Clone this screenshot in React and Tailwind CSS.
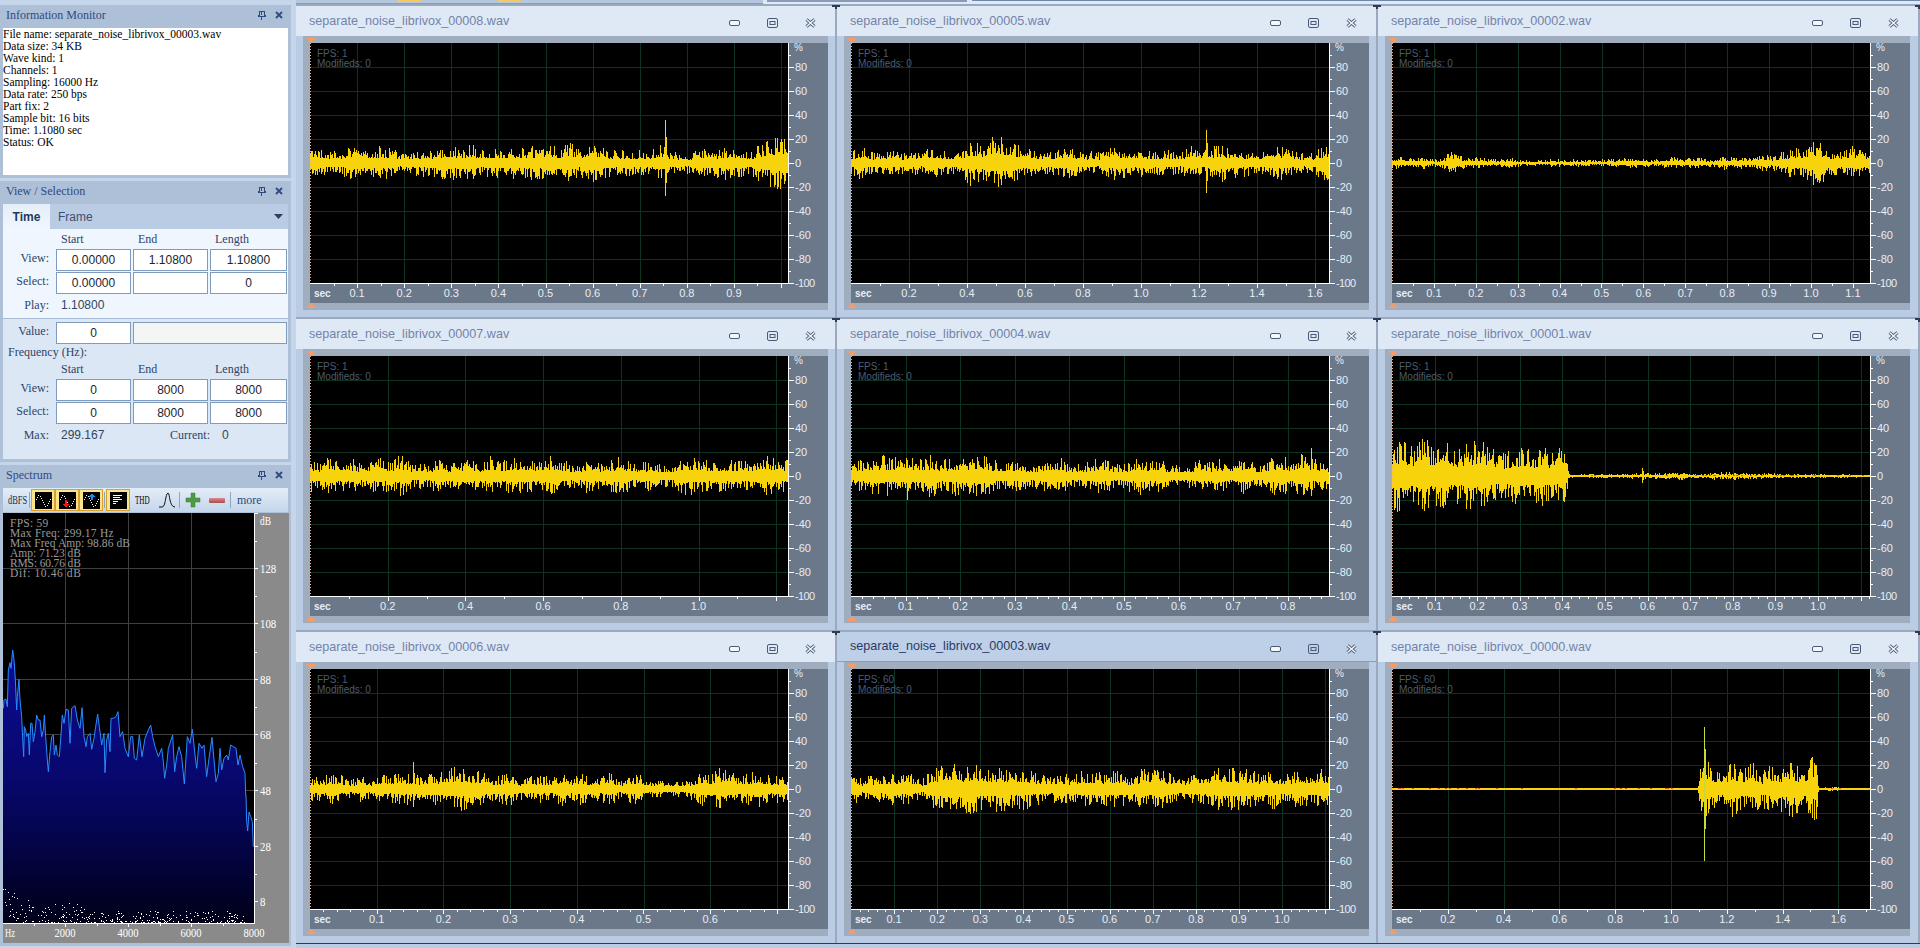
import React from "react";

const SERIF = { fontFamily: '"Liberation Serif", serif' };
const SANS = { fontFamily: '"Liberation Sans", sans-serif' };

// seeded random so the noise stays the same on every render
const makeRandom = (seed) => {
  let a = seed;
  return () => {
    a = (a + 0x6d2b79f5) | 0;
    let t = Math.imul(a ^ (a >>> 15), 1 | a);
    t = (t + Math.imul(t ^ (t >>> 7), 61 | t)) ^ t;
    return ((t ^ (t >>> 14)) >>> 0) / 4294967296;
  };
};

const envAt = (env, f) => {
  for (let i = 1; i < env.length; i++) {
    if (f <= env[i][0]) {
      const [x0, y0] = env[i - 1];
      const [x1, y1] = env[i];
      return y0 + ((y1 - y0) * (f - x0)) / (x1 - x0);
    }
  }
  return env[env.length - 1][1];
};

const windows = [
  { name: "00008", fps: 1, px: 47.1, step: 0.1, count: 9, sub: 2, seed: 8,
    env: [[0, 13], [0.3, 13], [0.5, 15], [0.7, 12], [0.85, 14], [0.95, 17], [1, 26]],
    spikes: [[355, 43, 33], [470, 20, 26]] },
  { name: "00005", fps: 1, px: 58, step: 0.2, count: 8, sub: 2, seed: 5,
    env: [[0, 12], [0.2, 12], [0.25, 22], [0.33, 24], [0.4, 14], [0.6, 12], [0.8, 14], [1, 13]],
    spikes: [[355, 33, 30], [150, 26, 22]] },
  { name: "00002", fps: 1, px: 41.9, step: 0.1, count: 11, sub: 2, seed: 2,
    env: [[0, 4], [0.1, 5], [0.13, 14], [0.16, 5], [0.3, 3], [0.5, 4], [0.7, 5], [0.8, 8], [0.9, 18], [0.95, 15], [1, 8]],
    spikes: [[428, 20, 18]] },
  { name: "00007", fps: 1, px: 77.7, step: 0.2, count: 5, sub: 2, seed: 7,
    env: [[0, 14], [0.5, 15], [0.8, 14], [1, 15]],
    spikes: [] },
  { name: "00004", fps: 1, px: 54.6, step: 0.1, count: 8, sub: 5, seed: 4,
    env: [[0, 13], [0.2, 16], [0.5, 13], [0.7, 13], [0.9, 15], [0.97, 20], [1, 16]],
    spikes: [[56, 4, 24], [460, 28, 20]] },
  { name: "00001", fps: 1, px: 42.6, step: 0.1, count: 10, sub: 5, seed: 1,
    env: [[0, 30], [0.1, 32], [0.2, 28], [0.35, 26], [0.362, 26], [0.37, 2], [0.5, 2], [0.55, 3], [0.72, 3], [0.8, 2], [1, 1.5]],
    spikes: [[250, 8, 7], [2, 26, 34], [36, 30, 32], [172, 22, 26]], red: true },
  { name: "00006", fps: 1, px: 66.7, step: 0.1, count: 6, sub: 5, seed: 6,
    env: [[0, 12], [0.1, 10], [0.2, 14], [0.3, 17], [0.4, 13], [0.5, 14], [0.7, 10], [0.75, 8], [0.85, 16], [1, 14]],
    spikes: [[103, 27, 18]] },
  { name: "00003", fps: 60, px: 43.1, step: 0.1, count: 10, sub: 5, seed: 3, active: true,
    env: [[0, 12], [0.15, 12], [0.2, 20], [0.33, 20], [0.42, 13], [0.6, 15], [0.75, 15], [0.9, 17], [1, 15]],
    spikes: [] },
  { name: "00000", fps: 60, px: 55.8, step: 0.2, count: 8, sub: 2, seed: 10,
    env: [[0, 1], [0.638, 1], [0.646, 22], [0.8, 22], [0.885, 24], [0.892, 1.5], [1, 1.5]],
    spikes: [[424, 24, 30]], red: true, burst: [312, 62, 72] },
];

const wavePath = (w) => {
  const rnd = makeRandom(w.seed * 7919);
  // slow wobble of the loudness, so the band is not a flat strip
  const knots = Array.from({ length: 60 }, () => 0.65 + rnd() * 0.6);
  let d = "";
  for (let x = 0; x < 478; x++) {
    const k = x / 10;
    const i = Math.floor(k);
    const mod = knots[i] + (knots[i + 1] - knots[i]) * (k - i);
    const e = envAt(w.env, x / 478) * 1.2 * mod;
    const up = e * (0.3 + 0.7 * Math.pow(rnd(), 1.8));
    const down = e * (0.3 + 0.7 * Math.pow(rnd(), 1.8));
    d += `M${x + 0.5} ${(120 - Math.max(up, 1)).toFixed(1)}V${(120 + Math.max(down, 1)).toFixed(1)}`;
  }
  w.spikes.forEach(([x, u, v]) => {
    d += `M${x + 0.5} ${120 - u}V${120 + v}M${x + 1.5} ${120 - u * 0.6}V${120 + v * 0.6}`;
  });
  return d;
};

const Plot = ({ w }) => {
  const gridX = [];
  for (let x = w.px; x < 478; x += w.px) gridX.push(Math.round(x));
  const ticksX = [];
  for (let x = w.px / w.sub; x < 478; x += w.px / w.sub) ticksX.push(Math.round(x));
  const yVals = [80, 60, 40, 20, 0, -20, -40, -60, -80, -100];
  const rnd = makeRandom(w.seed * 31);
  const reds = w.red ? Array.from({ length: 40 }, () => Math.round(rnd() * 478)) : [];
  return (
    <svg width="518" height="260" className="block" style={SANS} shapeRendering="crispEdges">
      <rect x="0" y="0" width="478" height="240" fill="#000" />
      {gridX.map((x) => (
        <line key={x} x1={x + 0.5} x2={x + 0.5} y1="0" y2="240" stroke="#0d3320" />
      ))}
      {yVals.slice(0, -1).map((v) => {
        const y = 120 - v * 1.2;
        return <line key={v} x1="0" x2="478" y1={y + 0.5} y2={y + 0.5} stroke="#0d3320" />;
      })}
      <path d={wavePath(w)} stroke="#f6d30a" strokeWidth="1" fill="none" />
      <line x1="0" x2="478" y1="120" y2="120" stroke="#f6d30a" strokeWidth="2" />
      {reds.map((x, i) => (
        (w.name !== "00000" && x < 175) || (w.name === "00000" && x > 300 && x < 430) ? null : (
          <rect key={i} x={x} y="119" width="2" height="1" fill="#e2571a" />
        )
      ))}
      {w.burst && (
        <path d={`M${w.burst[0] + 0.5} ${120 - w.burst[1]}V${120 + w.burst[2]}M${w.burst[0] + 1.5} ${120 - 40}V${120 + 40}`} stroke="#c6da3c" fill="none" />
      )}
      <line x1="0.5" x2="0.5" y1="0" y2="240" stroke="#f2b08e" strokeDasharray="1 2" />
      <text x="7" y="14" fontSize="10" fill="#4b5c70">FPS: {w.fps}</text>
      <text x="7" y="24" fontSize="10" fill="#4b5c70">Modifieds: 0</text>
      {/* axes */}
      <line x1="478.5" x2="478.5" y1="0" y2="241" stroke="#fff" />
      <line x1="0" x2="479" y1="240.5" y2="240.5" stroke="#fff" />
      <text x="484" y="8" fontSize="10" fill="#e8edf5">%</text>
      {yVals.map((v) => {
        const y = 120 - v * 1.2;
        return (
          <g key={v}>
            <line x1="479" x2="484" y1={y + 0.5} y2={y + 0.5} stroke="#fff" />
            <line x1="479" x2="481" y1={y - 11.5} y2={y - 11.5} stroke="#fff" />
            <text x="485" y={y + 4} fontSize="11" fill="#e8edf5" textLength={v === -100 ? 20 : undefined}>{v}</text>
          </g>
        );
      })}
      {ticksX.map((x, i) => (
        <line key={x} x1={x + 0.5} x2={x + 0.5} y1="241" y2={(i + 1) % w.sub === 0 ? 245 : 243} stroke="#fff" />
      ))}
      <text x="4" y="254" fontSize="10" fontWeight="700" fill="#e8edf5">sec</text>
      {Array.from({ length: w.count }, (_, i) => (
        <text key={i} x={(i + 1) * w.px} y="254" fontSize="11" fill="#e8edf5" textAnchor="middle">
          {((i + 1) * w.step).toFixed(1)}
        </text>
      ))}
    </svg>
  );
};

const Marker = ({ up }) => (
  <svg width="10" height="5" className="block ml-[3px]">
    <path d={up ? "M5 0L10 5H0Z" : "M0 0H10L5 5Z"} fill="#fb9a63" />
  </svg>
);

const WaveWindow = ({ w }) => (
  <div className="relative h-[313px] border-t-2 border-r-2 border-[#9aa9bd] bg-[#b9cce4]">
    <div className={`h-[30px] flex items-center justify-between pl-[13px] text-[12.6px] ${w.active ? "bg-[#bdd0e8] text-[#2b3a66] border-b border-[#8d9db5]" : "bg-[#dfe9f6] text-[#7383a8]"}`} style={SANS}>
      <span>separate_noise_librivox_{w.name}.wav</span>
      <div className="flex items-center gap-[27px] pr-[19px] mt-[4px]">
        <svg width="11" height="6"><rect x="0.5" y="0.5" width="10" height="5" rx="1.5" fill="#f4f7fb" stroke="#4a5a78" /></svg>
        <svg width="11" height="10"><rect x="0.5" y="0.5" width="10" height="9" rx="1.5" fill="none" stroke="#4a5a78" /><rect x="3" y="3.5" width="5" height="3" fill="none" stroke="#4a5a78" /></svg>
        <svg width="11" height="10"><path d="M1.5 1.5L9.5 8.5M9.5 1.5L1.5 8.5" stroke="#4a5a78" strokeWidth="3" fill="none" /><path d="M1.5 1.5L9.5 8.5M9.5 1.5L1.5 8.5" stroke="#f4f7fb" strokeWidth="1.4" fill="none" /></svg>
      </div>
    </div>
    <div className="ml-[7px] w-[525px]">
      <div className="h-[7px] bg-[#a0adbf] pt-[2px]"><Marker /></div>
      <div className="flex">
        <div className="w-[7px] bg-[#a0adbf]" />
        <div className="bg-[#6b7889]"><Plot w={w} /></div>
      </div>
      <div className="h-[7px] bg-[#a0adbf]"><Marker up /></div>
    </div>
    {/* little split handle on the corner of each window */}
    <div className="absolute -top-[1px] -right-[5px] z-10 flex flex-col items-center">
      <div className="w-[8px] h-[2px] bg-[#2c3a55]" />
      <div className="w-[2px] h-[2px] bg-[#2c3a55]" />
    </div>
  </div>
);

const PanelTitle = ({ children }) => (
  <div className="h-[23px] flex items-center justify-between pl-[6px] pr-[8px] pb-[4px] text-[12px] text-[#2f4a80]" style={SERIF}>
    <span>{children}</span>
    <div className="flex items-center gap-[9px]">
      <svg width="9" height="10" viewBox="0 0 9 10">
        <path d="M2 1H7V5H8V6H1V5H2ZM4 2V5M4 6V10" stroke="#2f4a80" strokeWidth="1" fill="none" shapeRendering="crispEdges" />
      </svg>
      <svg width="8" height="8" viewBox="0 0 8 8">
        <path d="M1 1L7 7M7 1L1 7" stroke="#2f4a80" strokeWidth="1.8" fill="none" />
      </svg>
    </div>
  </div>
);

const infoLines = [
  "File name: separate_noise_librivox_00003.wav",
  "Data size: 34 KB",
  "Wave kind: 1",
  "Channels: 1",
  "Sampling: 16000 Hz",
  "Data rate: 250 bps",
  "Part fix: 2",
  "Sample bit: 16 bits",
  "Time: 1.1080 sec",
  "Status: OK",
];

const Box = ({ children, wide }) => (
  <div className={`h-[22px] ${wide ? "w-[77px]" : "w-[75px]"} border border-[#7f9bbd] bg-white flex items-center justify-center text-[12px] text-[#1a2433]`} style={SANS}>
    {children}
  </div>
);

const Label = ({ children }) => (
  <div className="w-[46px] text-right text-[12px] text-[#2d4468] whitespace-nowrap" style={SERIF}>{children}</div>
);

const FieldRow = ({ label, a, b, c }) => (
  <div className="h-[23px] flex items-start">
    <Label>{label}</Label>
    <div className="ml-[7px] flex gap-[2px]">
      <Box>{a}</Box>
      <Box>{b}</Box>
      <Box wide>{c}</Box>
    </div>
  </div>
);

const HeadRow = () => (
  <div className="h-[20px] flex text-[12px] text-[#2d4468] items-center" style={SERIF}>
    <span className="ml-[58px] w-[77px]">Start</span>
    <span className="w-[77px]">End</span>
    <span>Length</span>
  </div>
);

const ViewSelection = () => (
  <div className="mx-[3px] h-[255px] bg-[#dce7f5]">
    <div className="h-[25px] flex bg-[#b9cce4] items-center" style={SANS}>
      <div className="w-[47px] h-full bg-gradient-to-b from-[#e4eefa] to-[#f0f6fe] flex items-center justify-center font-bold text-[#1f3a60] text-[12px]">Time</div>
      <span className="ml-[8px] text-[#3c5070] text-[12px]">Frame</span>
      <svg width="9" height="5" className="ml-auto mr-[5px]"><path d="M0 0H9L4.5 5Z" fill="#2c3f60" /></svg>
    </div>
    <div className="h-[90px] bg-[#f0f6fe] border-b border-[#a9bdd6]">
      <HeadRow />
      <FieldRow label="View:" a="0.00000" b="1.10800" c="1.10800" />
      <FieldRow label="Select:" a="0.00000" c="0" />
      <div className="flex items-center h-[20px]">
        <Label>Play:</Label>
        <span className="ml-[12px] text-[12px] text-[#2f4560]" style={SANS}>1.10800</span>
      </div>
    </div>
    <div className="pt-[3px]">
      <div className="flex items-start h-[22px]">
        <Label>Value:</Label>
        <div className="ml-[7px] flex gap-[2px]">
          <Box>0</Box>
          <div className="w-[154px] h-[22px] border border-[#7f9bbd] bg-[#f4f5f5]" />
        </div>
      </div>
      <div className="h-[15px] pl-[5px] text-[12px] text-[#2d4468] flex items-center" style={SERIF}>Frequency (Hz):</div>
      <HeadRow />
      <FieldRow label="View:" a="0" b="8000" c="8000" />
      <FieldRow label="Select:" a="0" b="8000" c="8000" />
      <div className="flex items-center h-[20px]">
        <Label>Max:</Label>
        <span className="ml-[12px] w-[103px] text-[12px] text-[#2f4560]" style={SANS}>299.167</span>
        <Label>Current:</Label>
        <span className="ml-[12px] text-[12px] text-[#2f4560]" style={SANS}>0</span>
      </div>
    </div>
  </div>
);

const ToolIcon = ({ children }) => (
  <div className="w-[24px] h-[22px] border border-[#d8a030] bg-[#fbe48a] flex items-center justify-center">
    <svg width="17" height="17" viewBox="0 0 17 17" shapeRendering="crispEdges">
      <rect width="17" height="17" fill="#000" />
      {children}
    </svg>
  </div>
);

const waveDots = (
  <path d="M1 7h1M2 5h1M3 3h1M5 4h1M6 6h1M7 8h1M8 10h1M9 12h1M10 14h1M12 13h1M13 11h1M14 9h1M15 7h1" stroke="#fff" />
);

const Sep = ({ className = "" }) => <div className={`w-[1px] h-[16px] bg-[#8fa5c0] ${className}`} />;

const Toolbar = () => (
  <div className="mx-[3px] h-[24px] flex items-center bg-gradient-to-b from-[#e3edf8] to-[#c4d6ec]">
    <span className="ml-[5px] w-[20px] text-[12px] text-[#1c2a44] scale-x-[0.7] origin-left" style={SERIF}>dBFS</span>
    <Sep className="ml-[1px] mr-[1px]" />
    <div className="flex">
      <ToolIcon>{waveDots}</ToolIcon>
      <ToolIcon>{waveDots}<path d="M6 8h2v4h2l-3 4-3-4h2z" fill="#f01818" /></ToolIcon>
      <ToolIcon>{waveDots}<path d="M9 1l3 4h-2v3H8V5H6z" fill="#1890f0" /></ToolIcon>
    </div>
    <Sep className="ml-[1px] mr-[1px]" />
    <ToolIcon><path d="M3 3h9v1H3zM3 5h7v1H3zM3 7h9v1H3zM3 9h5v1H3zM3 11h3v1H3z" fill="#fff" /></ToolIcon>
    <span className="ml-[5px] w-[15px] text-[13px] text-black scale-x-[0.55] origin-left" style={SERIF}>THD</span>
    <svg width="18" height="16" className="ml-[8px]" viewBox="0 0 18 16"><path d="M1 15H4C8 15 7 2 10 1C12 1 11 15 17 15" stroke="#111" fill="none" strokeWidth="1" /></svg>
    <Sep className="ml-[3px]" />
    <svg width="16" height="16" className="ml-[5px]" viewBox="0 0 16 16"><path d="M6 1H10V6H15V10H10V15H6V10H1V6H6Z" fill="#4c9a44" stroke="#3a7d34" strokeWidth="0.5" /></svg>
    <div className="ml-[8px] w-[16px] h-[5px] rounded-[1px] bg-gradient-to-b from-[#d88a8a] to-[#a84c4c]" />
    <Sep className="ml-[5px]" />
    <span className="ml-[6px] text-[12px] text-[#2f4a80]" style={SERIF}>more</span>
  </div>
);

// traced from the reference, page pixels = zoom / 3, 640 + zoom / 3
const spectrum = [
  [10, 205], [12, 180], [18, 178], [22, 200], [25, 90], [30, 68], [33, 85], [38, 30], [42, 60], [46, 118], [50, 210], [52, 170], [57, 118], [60, 180], [65, 230], [68, 295], [71, 350], [73, 260], [77, 270], [80, 290], [85, 280], [88, 345], [92, 250], [96, 250], [100, 305], [105, 275], [110, 225], [115, 240], [120, 240], [125, 290], [130, 270], [133, 225], [137, 290], [142, 360], [145, 395], [150, 335], [155, 290], [160, 285], [163, 345], [168, 315], [172, 345], [178, 350], [183, 285], [187, 225], [192, 250], [198, 208], [205, 210], [210, 310], [215, 205], [225, 197], [232, 240], [240, 265], [246, 203], [252, 290], [258, 320], [262, 290], [270, 280], [275, 328], [282, 295], [287, 260], [293, 222], [298, 260], [305, 315], [312, 280], [315, 398], [320, 300], [325, 280], [330, 335], [333, 235], [340, 235], [348, 230], [354, 215], [360, 290], [368, 275], [375, 325], [385, 350], [392, 290], [398, 290], [403, 355], [410, 360], [418, 285], [426, 350], [435, 295], [445, 270], [452, 255], [458, 290], [465, 320], [475, 350], [485, 325], [490, 365], [494, 415], [500, 375], [505, 325], [518, 285], [524, 395], [530, 350], [537, 320], [545, 350], [553, 432], [562, 290], [570, 310], [577, 268], [585, 345], [590, 385], [597, 310], [606, 325], [612, 315], [620, 410], [627, 355], [636, 292], [642, 360], [648, 425], [655, 400], [660, 325], [665, 390], [672, 355], [680, 345], [685, 360], [692, 315], [700, 320], [708, 325], [714, 375], [720, 345], [728, 380], [735, 400], [737, 465], [738, 465], [740, 543], [743, 573], [747, 516], [752, 530], [757, 545], [760, 620],
].map(([x, y]) => [x / 3, 640 + y / 3]);

const SpectrumChart = () => {
  const rnd = makeRandom(4242);
  const dots = [];
  for (let i = 0; i < 300; i++) {
    const x = 3 + Math.floor(rnd() * 243);
    const top = x < 18 ? 34 : x < 30 ? 26 : x < 85 ? 20 : 12;
    dots.push([x, 922 - Math.floor(Math.pow(rnd(), 1.5) * top)]);
  }
  const line = spectrum.map((p) => p.join(",")).join(" ");
  const fill = `3,923 3,708 ${line} 254,850 254,923`;
  const yLabels = [[568, 128], [623, 108], [679, 88], [734, 68], [790, 48], [846, 28], [901, 8]];
  const info = ["FPS: 59", "Max Freq: 299.17 Hz", "Max Freq Amp: 98.86 dB", "Amp: 71.23 dB", "RMS: 60.76 dB", "Dif: 10.46 dB"];
  return (
    <svg width="286" height="430" viewBox="3 513 286 430" className="block mx-[3px] mt-[1px]">
      <defs>
        <linearGradient id="spec" gradientUnits="userSpaceOnUse" x1="0" x2="0" y1="650" y2="923">
          <stop offset="0" stopColor="#0c0c96" />
          <stop offset="0.5" stopColor="#07076a" />
          <stop offset="1" stopColor="#000018" />
        </linearGradient>
      </defs>
      <rect x="3" y="513" width="286" height="430" fill="#8a8a8a" />
      <rect x="3" y="513" width="251" height="410" fill="#000" />
      <g shapeRendering="crispEdges" stroke="#404040">
        {[65, 128, 191].map((x) => <line key={x} x1={x + 0.5} x2={x + 0.5} y1="513" y2="923" />)}
        {yLabels.map(([y]) => <line key={y} x1="3" x2="254" y1={y + 0.5} y2={y + 0.5} />)}
      </g>
      <g style={SERIF} fontSize="11.5" fill="#9a9a9a">
        {info.map((t, i) => <text key={t} x="10" y={527 + i * 10} textLength={t.length * 5.45}>{t}</text>)}
      </g>
      <polygon points={fill} fill="url(#spec)" />
      <polyline points={line} fill="none" stroke="#2a8cff" strokeWidth="1" />
      {dots.map(([x, y], i) => <rect key={i} x={x} y={y} width="1" height="1" fill="#fff" />)}
      <g shapeRendering="crispEdges" stroke="#fff">
        <line x1="254.5" x2="254.5" y1="513" y2="924" />
        <line x1="3" x2="255" y1="923.5" y2="923.5" />
        <line x1="255" x2="258" y1="513.5" y2="513.5" />
        {yLabels.map(([y]) => <line key={y} x1="255" x2="258" y1={y + 0.5} y2={y + 0.5} />)}
        {yLabels.map(([y]) => <line key={y} x1="255" x2="257" y1={y - 27} y2={y - 27} />)}
        {[65, 128, 191].map((x) => <line key={x} x1={x + 0.5} x2={x + 0.5} y1="924" y2="927" />)}
        {[34, 97, 160, 223].map((x) => <line key={x} x1={x + 0.5} x2={x + 0.5} y1="924" y2="926" />)}
      </g>
      <g style={SERIF} fontSize="12" fill="#fff">
        <text x="260" y="525" textLength="11" lengthAdjust="spacingAndGlyphs">dB</text>
        {yLabels.map(([y, v]) => (
          <text key={y} x="260" y={y + 5} textLength={String(v).length * 5.4} lengthAdjust="spacingAndGlyphs">{v}</text>
        ))}
        <text x="5" y="937" textLength="10" lengthAdjust="spacingAndGlyphs">Hz</text>
        {[[65, 2000], [128, 4000], [191, 6000], [254, 8000]].map(([x, v]) => (
          <text key={v} x={x - 10.5} y="937" textLength="21" lengthAdjust="spacingAndGlyphs">{v}</text>
        ))}
      </g>
    </svg>
  );
};

export default function App() {
  return (
    <div className="w-[1920px] h-[948px] overflow-hidden flex bg-[#b9cce4]">
      {/* left dock */}
      <div className="w-[296px] h-full bg-[#c5d5ea] pr-[5px] flex flex-col">
        <div className="h-[5px] bg-[#c5d5ea]" />
        <div className="h-[173px] bg-[#adc0d8]">
          <PanelTitle>Information Monitor</PanelTitle>
          <div className="mx-[3px] h-[147px] bg-white text-[11.5px] leading-[12px] text-black whitespace-nowrap" style={SERIF}>
            {infoLines.map((l) => <div key={l}>{l}</div>)}
          </div>
        </div>
        <div className="h-[3px]" />
        <div className="h-[281px] bg-[#adc0d8]">
          <PanelTitle>View / Selection</PanelTitle>
          <ViewSelection />
        </div>
        <div className="h-[3px]" />
        <div className="h-[481px] bg-[#adc0d8]">
          <PanelTitle>Spectrum</PanelTitle>
          <Toolbar />
          <SpectrumChart />
        </div>
      </div>

      {/* wave windows */}
      <div className="flex-1 min-w-0">
        <div className="h-[4px] flex bg-[#dfe9f6]">
          <div className="w-[467px] h-full bg-[#b5c7de] border-b border-[#8d9db5] flex">
            <div className="ml-[102px] w-[23px] h-[2px] bg-[#f7c95c]" />
            <div className="ml-[77px] w-[23px] h-[2px] bg-[#f7c95c]" />
          </div>
          <div className="w-[200px] ml-[4px] h-[2px] bg-[#8a9bb5]" />
          <div className="flex-1 ml-[5px] h-[1px] bg-[#6f86ad]" />
        </div>
        <div className="grid grid-cols-[541px_541px_542px]">
          {windows.map((w) => <WaveWindow key={w.name} w={w} />)}
        </div>
        <div className="h-[1px] bg-[#2c3a55]" />
      </div>
    </div>
  );
}
